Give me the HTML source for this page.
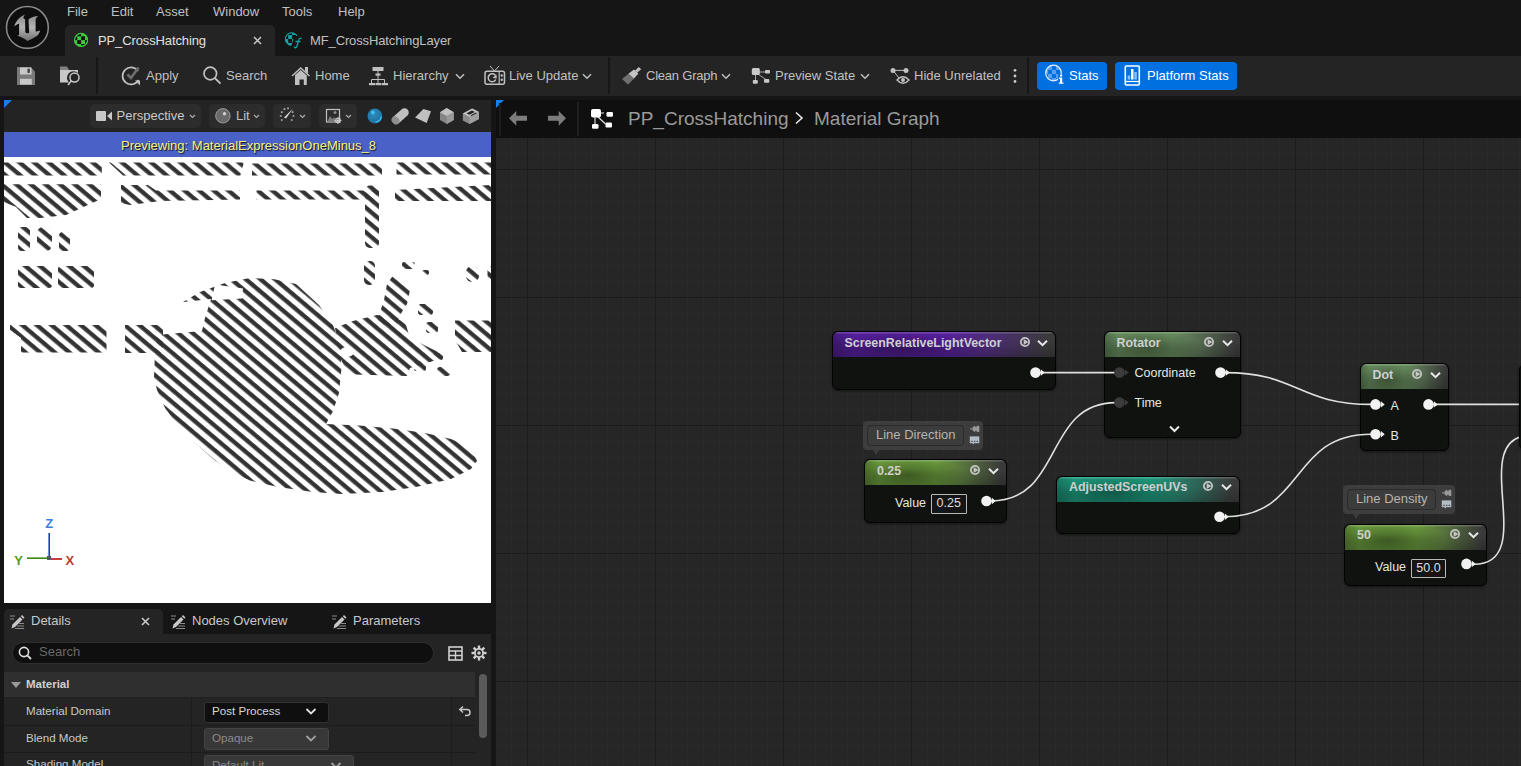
<!DOCTYPE html>
<html><head><meta charset="utf-8">
<style>
*{margin:0;padding:0;box-sizing:border-box}
html,body{width:1521px;height:766px;overflow:hidden;background:#151515;font-family:"Liberation Sans",sans-serif;color:#c0c0c0;position:relative}
.a{position:absolute;white-space:nowrap}
.t13{font-size:13px;line-height:16px}
.menu{color:#c0c0c0;font-size:13px;top:4px}
#tabs .tab{position:absolute;top:25px;height:31px;border-radius:5px 5px 0 0}
#toolbar{position:absolute;left:0;top:56px;width:1521px;height:40px;background:#242424}
.tb{color:#c0c0c0;font-size:13px;top:12px;z-index:2}
.sep{position:absolute;width:2px;background:#171717}
#toolbar svg{z-index:2}
.btnblue{position:absolute;top:6px;height:28px;background:#0070e0;border-radius:4px}
#vp{position:absolute;left:4px;top:100px;width:487px;height:503px;background:#fff;overflow:hidden}
#vptb{position:absolute;left:0;top:0;width:487px;height:32px;background:#232323}
.vbtn{position:absolute;top:4px;height:24px;background:#2c2c2c;border-radius:5px}
#prevbar{position:absolute;left:0;top:32px;width:487px;height:25px;background:#4a62c8}
#graph{position:absolute;left:496px;top:100px;width:1025px;height:666px;overflow:hidden;
background-color:#262626;
background-image:
linear-gradient(to right,#1c1c1c 1px,transparent 1px),
linear-gradient(to bottom,#1c1c1c 1px,transparent 1px),
linear-gradient(to right,#2a2a2a 1px,transparent 1px),
linear-gradient(to bottom,#292929 1px,transparent 1px);
background-size:128px 128px,128px 128px,16px 16px,16px 16px;
background-position:31px 69px,31px 69px,15px 5px,15px 5px}
#gtitle{position:absolute;left:0;top:0;width:1025px;height:38px;background:rgba(12,12,12,0.86)}
#details{position:absolute;left:4px;top:609px;width:487px;height:157px}
.node{position:absolute;background:#10120f;border:1px solid #030303;border-radius:6px;box-shadow:0 1px 3px rgba(0,0,0,0.5);overflow:hidden}
.nh{position:absolute;left:0;top:0;right:0;border-radius:5px 5px 0 0}
.nt{position:absolute;font-weight:bold;font-size:12.4px;line-height:14px;color:#cfcfcf;white-space:nowrap}
.nic{position:absolute}
.pl{position:absolute;font-size:12.5px;line-height:14px;color:#e6e6e6;white-space:nowrap}
.vbox{position:absolute;border:1px solid #b8b8b8;border-radius:1px;background:#151515;font-size:12.5px;line-height:17px;color:#dedede;text-align:center}
.cm{position:absolute;background:rgba(70,70,70,0.75);border-radius:4px}
.cmi{position:absolute;left:4px;top:4.5px;height:20.5px;background:rgba(60,60,60,0.9);border:1px solid rgba(40,40,40,0.8);border-radius:4px}
.cmt{position:absolute;left:13px;top:6.5px;font-size:13px;line-height:16px;color:#b4b4b4;white-space:nowrap}
.cmtail{position:absolute;left:10px;bottom:-5px;width:0;height:0;border-left:3px solid transparent;border-right:3px solid transparent;border-top:5px solid rgba(70,70,70,0.75)}
</style></head><body>
<!-- logo -->
<svg class="a" style="left:0;top:0" width="56" height="56" viewBox="0 0 56 56">
<defs><linearGradient id="ug" x1="0" y1="0" x2="0" y2="1"><stop offset="0" stop-color="#8a8a8a"/><stop offset="0.5" stop-color="#b4b4b4"/><stop offset="1" stop-color="#707070"/></linearGradient></defs>
<circle cx="27.4" cy="27.4" r="20.9" fill="#0e0e0e" stroke="#8c8c8c" stroke-width="1.5"/>
<path d="M14.3 26.2 C15.5 22 18.5 17.5 25.5 14.3 C24 15.5 23.3 17 23.5 18.2 L25.1 19.6 L25.3 31.9 C25.8 33.3 27.5 33.8 29.2 32.8 L28.5 19.6 C31 17 34.5 16 38.3 15.9 C36.5 17 35.6 18.5 35.6 20 L35.6 31.5 C37 31.5 38.8 31 40.1 30.5 C39.5 33 38.5 34.5 37.4 35.6 C35 37.5 32.5 38.8 27.4 41 L25.1 39.2 C22 37.5 19.5 36.5 17.1 35.3 C18 35.2 18.9 35 19.1 34.7 L19.1 23.7 C17.5 24 15.8 25 14.3 26.2Z" fill="url(#ug)"/>
</svg>
<div class="a menu" style="left:67px">File</div>
<div class="a menu" style="left:111px">Edit</div>
<div class="a menu" style="left:156px">Asset</div>
<div class="a menu" style="left:213px">Window</div>
<div class="a menu" style="left:282px">Tools</div>
<div class="a menu" style="left:338px">Help</div>
<div id="tabs">
<div class="tab" style="left:65px;width:210px;background:#242424"></div>
<svg class="a" style="left:72px;top:31px" width="18" height="18" viewBox="72 31 18 18"><defs><clipPath id="tc"><circle cx="81.06" cy="39.9" r="6.3"/></clipPath></defs><circle cx="81.06" cy="39.9" r="7" fill="#3ec83e"/><g clip-path="url(#tc)" fill="#141414"><rect x="81.1" y="36.3" width="3.9" height="3.8"/><rect x="77.2" y="40.1" width="3.9" height="3.9"/><rect x="73.3" y="36.3" width="3.9" height="3.8"/><rect x="77.2" y="32.4" width="3.9" height="3.9"/><rect x="85" y="40.1" width="3.9" height="3.9"/><rect x="81.1" y="44" width="3.9" height="3.9"/></g><circle cx="81.06" cy="39.9" r="6.5" fill="none" stroke="#3ec83e" stroke-width="1.1"/></svg>
<div class="a t13" style="left:98px;top:33px;color:#e0e0e0;letter-spacing:-0.12px">PP_CrossHatching</div>
<svg class="a" style="left:253px;top:36px" width="9" height="9" viewBox="0 0 9 9"><path d="M1 1L8 8M8 1L1 8" stroke="#c8c8c8" stroke-width="1.5"/></svg>
<svg class="a" style="left:282px;top:30px" width="22" height="20" viewBox="282 30 22 20"><defs><clipPath id="tc2"><circle cx="291.6" cy="39" r="5.9"/></clipPath></defs><circle cx="291.6" cy="39" r="6.6" fill="#18a0a2"/><g clip-path="url(#tc2)" fill="#141414"><rect x="292.1" y="35" width="3.9" height="4"/><rect x="288.2" y="39" width="3.9" height="3.9"/><rect x="284.3" y="35" width="3.9" height="4"/><rect x="288.2" y="31" width="3.9" height="4"/><rect x="296" y="39" width="3.9" height="3.9"/><rect x="292.1" y="42.9" width="3.9" height="3.9"/></g><circle cx="291.6" cy="39" r="6.2" fill="none" stroke="#18a0a2" stroke-width="1"/><path d="M294.5 36 L300 36 L303 50 L290 50Z" fill="#151515"/><path d="M301.5 39 C300.5 37.5 299 38 298.6 40.5 L296.8 46.5 C296.3 48 294.8 48.2 294 46.8 M295.5 41.5 H300.5" fill="none" stroke="#18a0a2" stroke-width="1.3"/></svg>
<div class="a t13" style="left:310px;top:33px;color:#c0c0c0;letter-spacing:-0.12px">MF_CrossHatchingLayer</div>
</div>
<div id="toolbar">
<div class="sep" style="left:96px;top:1px;height:37px"></div>
<svg class="a" style="left:16px;top:10px" width="20" height="20" viewBox="0 0 20 20"><path d="M1 1 H14.5 L19 5.5 V19 H1Z" fill="#7a7a7a"/><rect x="4" y="1.5" width="11.5" height="7" fill="#c8c8c8"/><rect x="11.5" y="2.7" width="2.3" height="4.2" fill="#3a3a3a"/><rect x="4" y="12.8" width="11.8" height="5.8" fill="#c8c8c8"/></svg>
<svg class="a" style="left:59px;top:9px" width="23" height="22" viewBox="0 0 23 22"><path d="M1 1.5 H8 L10 5 H1Z" fill="#808080"/><path d="M1 5 H19 V8 A6 6 0 0 0 10 17.5 H1Z" fill="#c8c8c8"/><circle cx="15.5" cy="12.5" r="4.5" fill="none" stroke="#c8c8c8" stroke-width="1.5"/><path d="M12.5 15.5 L9 20" stroke="#c8c8c8" stroke-width="1.6"/></svg>
<svg class="a" style="left:121px;top:9px" width="22" height="22" viewBox="0 0 22 22"><path d="M17 6 A8.5 8.5 0 1 0 17.5 15" fill="none" stroke="#c0c0c0" stroke-width="1.7"/><path d="M14 15.5 H19 V20.5Z" fill="#c0c0c0"/><path d="M6.5 9.5 L10 13 L17.5 2.5" fill="none" stroke="#6e6e6e" stroke-width="2.6"/></svg>
<svg class="a" style="left:202px;top:9px" width="20" height="20" viewBox="0 0 20 20"><circle cx="8.3" cy="8.5" r="6.3" fill="none" stroke="#c0c0c0" stroke-width="1.7"/><path d="M12.8 13 L18.5 18.7" stroke="#c0c0c0" stroke-width="1.9"/></svg>
<svg class="a" style="left:291px;top:10px" width="20" height="20" viewBox="0 0 20 20"><path d="M1 10 L9.7 2 L18.5 10" fill="none" stroke="#c0c0c0" stroke-width="1.5"/><path d="M14 1 H17 V8 L14 5Z" fill="#c0c0c0"/><path d="M4 9 L9.7 4 L15.8 9.5 V19 H12.8 V13.5 H8.5 V19 H4Z" fill="#c0c0c0"/></svg>
<svg class="a" style="left:368px;top:10px" width="21" height="20" viewBox="0 0 21 20"><g fill="#c0c0c0"><rect x="4.5" y="1" width="11" height="4"/><rect x="7.5" y="7.5" width="5" height="2.2"/><rect x="1" y="17" width="6" height="2.2"/><rect x="7.5" y="17" width="6" height="2.2"/><rect x="14" y="17" width="6" height="2.2"/></g><path d="M10 5 V17 M3.5 13.5 H16.5 M3.5 13.5 V17 M16.5 13.5 V17" stroke="#c0c0c0" stroke-width="1"/></svg>
<svg class="a" style="left:455px;top:17px" width="10" height="7" viewBox="0 0 10 7"><path d="M1 1.3 L5 5.3 L9 1.3" fill="none" stroke="#c0c0c0" stroke-width="1.5"/></svg>
<svg class="a" style="left:484px;top:9px" width="22" height="21" viewBox="0 0 22 21"><path d="M6 1 L10.5 6 L15 1" fill="none" stroke="#c0c0c0" stroke-width="1"/><rect x="1" y="6.3" width="19.5" height="13" rx="2" fill="none" stroke="#c0c0c0" stroke-width="1.5"/><path d="M15.2 6.5 V19" stroke="#c0c0c0" stroke-width="1.2"/><circle cx="17.8" cy="10.5" r="1.2" fill="#c0c0c0"/><circle cx="17.8" cy="14.8" r="1.2" fill="#c0c0c0"/><path d="M11.5 10.5 A4 4 0 1 0 11.8 14.5" fill="none" stroke="#c0c0c0" stroke-width="1.5"/><path d="M8.5 13 L12.5 9.5 L12.8 13.5Z" fill="#c0c0c0"/></svg>
<svg class="a" style="left:582px;top:17px" width="10" height="7" viewBox="0 0 10 7"><path d="M1 1.3 L5 5.3 L9 1.3" fill="none" stroke="#c0c0c0" stroke-width="1.5"/></svg>
<svg class="a" style="left:622px;top:10.5px" width="21" height="19" viewBox="0 0 21 19"><g transform="translate(0.2,0.1) scale(0.9 0.82)"><path d="M21.1 2.5 L16.8 6.7 L14.3 4.2 L18.5 -0.1Z" fill="#c0c0c0"/><path d="M18.0 7.9 L12.9 14.1 L6.9 8.1 L13.1 3.0Z" fill="#c4c4c4"/><path d="M12.9 14.1 L6.5 21.2 L-0.2 14.5 L6.9 8.1Z" fill="#707070"/></g></svg>
<svg class="a" style="left:721px;top:17px" width="10" height="7" viewBox="0 0 10 7"><path d="M1 1.3 L5 5.3 L9 1.3" fill="none" stroke="#c0c0c0" stroke-width="1.5"/></svg>
<svg class="a" style="left:751px;top:11px" width="20" height="18" viewBox="0 0 20 18"><path d="M5 5 H16 M4.5 6 V14 M5.5 6 L15.5 13" stroke="#a8a8a8" stroke-width="1"/><rect x="0.8" y="1" width="8" height="7" rx="1.5" fill="#c8c8c8"/><rect x="14" y="3" width="5" height="3.6" rx="1" fill="#c8c8c8"/><rect x="1.8" y="13" width="5" height="3.7" rx="1" fill="#c8c8c8"/><rect x="13" y="12" width="5.3" height="3.7" rx="1" fill="#c8c8c8"/></svg>
<svg class="a" style="left:860px;top:17px" width="10" height="7" viewBox="0 0 10 7"><path d="M1 1.3 L5 5.3 L9 1.3" fill="none" stroke="#c0c0c0" stroke-width="1.5"/></svg>
<svg class="a" style="left:889px;top:10px" width="21" height="20" viewBox="0 0 21 20"><circle cx="4" cy="4.4" r="2.5" fill="#c0c0c0"/><circle cx="17" cy="4.4" r="2.5" fill="#c0c0c0"/><path d="M4 4.4 H17 M4 4.4 L10 12" stroke="#c0c0c0" stroke-width="1"/><path d="M8 14 Q14 7.5 20 14 Q14 20.5 8 14Z" fill="none" stroke="#c0c0c0" stroke-width="1.4"/><circle cx="14" cy="14" r="2" fill="#c0c0c0"/></svg>
<svg class="a" style="left:1012px;top:11px" width="6" height="18" viewBox="0 0 6 18"><circle cx="3" cy="3.3" r="1.4" fill="#c8c8c8"/><circle cx="3" cy="9" r="1.4" fill="#c8c8c8"/><circle cx="3" cy="14.5" r="1.4" fill="#c8c8c8"/></svg>
<svg class="a" style="left:1044px;top:8px" width="20" height="20" viewBox="0 0 20 20"><defs><clipPath id="sc"><circle cx="9.5" cy="9" r="7.6"/></clipPath></defs><g clip-path="url(#sc)" fill="#5aa0f0"><rect x="4" y="2" width="4" height="4"/><rect x="8" y="6" width="4" height="4"/><rect x="4" y="10" width="4" height="4"/><rect x="12" y="2" width="4" height="4"/><rect x="0" y="6" width="4" height="4"/><rect x="12" y="10" width="4" height="4"/><rect x="8" y="14" width="4" height="4"/></g><circle cx="9.5" cy="9" r="7.8" fill="none" stroke="#e8f0ff" stroke-width="1.2"/><rect x="14" y="10" width="6" height="10" fill="#0070e0"/><rect x="16" y="10.5" width="2.2" height="2" fill="#fff"/><path d="M14.8 13.5 H18.2 V18.5 H19.5 V19.8 H14.8 V18.5 H16 V14.8 H14.8Z" fill="#fff"/></svg>
<svg class="a" style="left:1124px;top:9px" width="17" height="21" viewBox="0 0 17 21"><rect x="1.3" y="1" width="14" height="19" rx="1" fill="none" stroke="#fff" stroke-width="1.6"/><path d="M1.5 16.5 H15" stroke="#fff" stroke-width="1.2"/><circle cx="8.3" cy="18.3" r="1" fill="#0070e0"/><rect x="3.7" y="10.5" width="2.5" height="4" fill="#8cc0f5"/><rect x="7" y="4" width="2.5" height="10.5" fill="#fff"/><rect x="10.3" y="7" width="2.5" height="7.5" fill="#8cc0f5"/></svg>

<div class="a tb" style="left:146px">Apply</div>
<div class="a tb" style="left:226px">Search</div>
<div class="a tb" style="left:315px">Home</div>
<div class="a tb" style="left:393px">Hierarchy</div>
<div class="a tb" style="left:509px">Live Update</div>
<div class="sep" style="left:608px;top:1px;height:37px"></div>
<div class="a tb" style="left:646px;letter-spacing:-0.22px">Clean Graph</div>
<div class="a tb" style="left:775px">Preview State</div>
<div class="a tb" style="left:914px">Hide Unrelated</div>
<div class="sep" style="left:1027px;top:1px;height:37px"></div>
<div class="btnblue" style="left:1037px;width:70px"></div>
<div class="a tb" style="left:1069px;color:#fff">Stats</div>
<div class="btnblue" style="left:1115px;width:122px"></div>
<div class="a tb" style="left:1147px;color:#fff">Platform Stats</div>
</div>
<svg class="a" style="left:4px;top:100px;z-index:3" width="9" height="9" viewBox="0 0 9 9"><path d="M0 0 H8 L0 8Z" fill="#1080f0"/></svg>
<div id="vp">
<div id="vptb">
<div class="vbtn" style="left:86px;width:111px"></div>
<div class="a t13" style="left:112.5px;top:8px;color:#c8c8c8">Perspective</div>
<div class="vbtn" style="left:205px;width:56px"></div>
<div class="a t13" style="left:232px;top:8px">Lit</div>
<div class="vbtn" style="left:269px;width:38px"></div>
<div class="vbtn" style="left:315px;width:38px"></div>
<svg class="a" style="left:92px;top:10px" width="18" height="12" viewBox="0 0 18 12"><rect x="0" y="1" width="10" height="10" rx="0.8" fill="#c8c8c8"/><path d="M11 6 L16 1.5 V10.5Z" fill="#c8c8c8"/></svg>
<svg class="a" style="left:185px;top:14px" width="7" height="5" viewBox="0 0 7 5"><path d="M1 1 L3.5 3.5 L6 1" fill="none" stroke="#b0b0b0" stroke-width="1.1"/></svg>
<svg class="a" style="left:211px;top:8px" width="16" height="16" viewBox="0 0 16 16"><circle cx="7.9" cy="7.8" r="7.2" fill="#6a6a6a" stroke="#9a9a9a" stroke-width="1"/><circle cx="9.5" cy="5.8" r="1.7" fill="#d0d0d0"/></svg>
<svg class="a" style="left:249px;top:14px" width="7" height="5" viewBox="0 0 7 5"><path d="M1 1 L3.5 3.5 L6 1" fill="none" stroke="#b0b0b0" stroke-width="1.1"/></svg>
<svg class="a" style="left:275px;top:7px" width="16" height="16" viewBox="0 0 16 16"><g fill="#9a9a9a"><circle cx="1.8" cy="9" r="1.1"/><circle cx="2.8" cy="5.2" r="1.1"/><circle cx="5.5" cy="2.2" r="1.1"/><circle cx="9" cy="1.3" r="1.1"/><circle cx="14.5" cy="9" r="1.1"/><circle cx="13.6" cy="5.2" r="1.1"/><circle cx="2.8" cy="13" r="1.1"/><circle cx="12.8" cy="13" r="1.1"/></g><path d="M5 10.5 L14 1.5 L7 11.5Z" fill="#d8d8d8"/></svg>
<svg class="a" style="left:295px;top:14px" width="7" height="5" viewBox="0 0 7 5"><path d="M1 1 L3.5 3.5 L6 1" fill="none" stroke="#b0b0b0" stroke-width="1.1"/></svg>
<svg class="a" style="left:321px;top:8px" width="17" height="16" viewBox="0 0 17 16"><rect x="1.5" y="1.5" width="13" height="12.5" fill="none" stroke="#c0c0c0" stroke-width="1.2"/><circle cx="10" cy="4.5" r="1.5" fill="#8a8a8a"/><path d="M2.5 13 L5 8 L7.5 11 L9 9 L11 12 L11 13Z" fill="#7a7a7a"/><circle cx="13" cy="12.5" r="2.4" fill="none" stroke="#d0d0d0" stroke-width="1"/><path d="M13 9 V16 M9.5 12.5 H16.5 M10.5 10 L15.5 15 M15.5 10 L10.5 15" stroke="#d0d0d0" stroke-width="0.8"/></svg>
<svg class="a" style="left:341px;top:14px" width="7" height="5" viewBox="0 0 7 5"><path d="M1 1 L3.5 3.5 L6 1" fill="none" stroke="#b0b0b0" stroke-width="1.1"/></svg>
<svg class="a" style="left:351px;top:0" width="136" height="32" viewBox="355 100 136 32">
<defs><radialGradient id="sph" cx="0.4" cy="0.35" r="0.65"><stop offset="0" stop-color="#2e8fc0"/><stop offset="1" stop-color="#1d6f9c"/></radialGradient></defs>
<circle cx="374.9" cy="116" r="7.4" fill="url(#sph)"/><circle cx="372.8" cy="112.5" r="1.8" fill="#3cc8ff"/><path d="M375.5 122 A6.2 6.2 0 0 0 381.2 116.5" fill="none" stroke="#3cc0f8" stroke-width="1.4"/>
<path d="M392.5 117.5 L401.5 109.5 A3.5 3.5 0 0 1 407.5 115.5 L398.5 123.5Z" fill="#c0c0c0"/><ellipse cx="395.5" cy="120.5" rx="3.6" ry="4.3" transform="rotate(-45 395.5 120.5)" fill="#8e8e8e"/>
<path d="M415.1 117.4 L423.4 108.9 L431 111.2 L426.6 123.1Z" fill="#c0c0c0"/>
<path d="M446.7 108 L453.8 112.3 V120.1 L446.7 124 L440 120.1 V112.3Z" fill="#858585"/><path d="M446.7 108 L453.8 112.3 L446.7 116 L440 112.3Z" fill="#c0c0c0"/><path d="M446.7 116 L453.8 112.3 V120.1 L446.7 124Z" fill="#9a9a9a"/>
<path d="M472.2 108.5 L479 112 V119 L469.5 124 L462.8 120.5 V113.4Z" fill="#8a8a8a"/><path d="M472.2 108.5 L479 112 L469.5 117 L462.8 113.4Z" fill="#c0c0c0"/><path d="M469.5 117 L479 112 V119 L469.5 124Z" fill="#a0a0a0"/>
<path d="M466.5 113.2 L472 110.4 L474.8 112 L469.3 114.8Z M470.5 115.3 L476 112.5 L477 113.1 L471.5 115.9Z" fill="#222"/>
</svg>
</div>
<svg class="a" style="left:0;top:57px" width="487" height="446" viewBox="0 0 487 446">
<defs><pattern id="hatch" patternUnits="userSpaceOnUse" width="20" height="9.43" patternTransform="rotate(40.13)">
<rect x="0" y="5.73" width="20" height="4.3" fill="#323232"/><rect x="0" y="-3.7" width="20" height="4.3" fill="#323232"/></pattern></defs>
<g transform="translate(-4,-157)" fill="url(#hatch)"><path d="M4.0 162.5 L101.8 162.5 L101.8 175.5 L4.0 175.5Z"/>
<path d="M109.0 162.5 L243.8 162.5 L240.3 175.5 L123.0 175.5Z"/>
<path d="M252.0 163.5 L382.0 163.5 L382.0 175.5 L252.0 175.5Z"/>
<path d="M396.5 162.5 L491.0 162.5 L491.0 174.5 L396.5 174.5Z"/>
<path d="M4.0 184.3 L101.0 184.3 L101.0 199.0 L66.0 215.0 L40.0 218.0 L27.0 218.0 L16.0 207.0 L4.0 202.0Z"/>
<path d="M121.0 185.0 L148.0 185.0 L156.0 190.5 L240.0 190.5 L240.0 199.5 L160.0 201.0 L130.0 205.0 L121.0 203.0Z"/>
<path d="M256.5 190.5 L377.0 190.5 L377.0 199.5 L256.5 199.5Z"/>
<path d="M395.0 190.0 L491.0 185.0 L491.0 201.0 L395.0 201.0Z"/>
<rect x="365" y="185.5" width="14" height="62.5" rx="5"/>
<rect x="364" y="261" width="11" height="24" rx="5"/>
<rect x="18" y="227" width="12" height="24" rx="4"/>
<rect x="37" y="227" width="15" height="24" rx="6"/>
<rect x="59" y="232" width="11" height="19" rx="4"/>
<rect x="18" y="266" width="34" height="22" rx="3"/>
<rect x="58" y="266" width="36" height="22" rx="3"/>
<path d="M10.0 325.0 L106.5 325.0 L106.5 352.6 L21.0 352.6 L21.0 338.0 L10.0 330.0Z"/>
<path d="M125.0 325.0 L163.0 325.0 L163.0 353.0 L125.0 353.0Z"/>
<path d="M183.0 302.0 L200.0 292.0 L225.0 283.0 L250.0 278.0 L273.0 279.0 L296.0 284.0 L319.0 305.0 L333.0 325.0 L341.0 348.0 L341.3 370.0 L339.0 393.0 L333.0 411.0 L326.0 424.0 L359.0 425.6 L393.0 428.6 L425.0 433.0 L451.0 439.0 L471.0 448.0 L477.0 461.0 L471.0 469.0 L451.0 479.0 L416.0 487.0 L382.0 492.0 L342.0 494.0 L313.0 492.0 L278.0 487.0 L250.0 480.5 L232.0 472.0 L215.0 460.5 L203.0 450.0 L190.0 438.0 L177.0 424.0 L165.0 408.0 L157.0 390.0 L154.0 377.0 L155.0 352.0 L157.0 335.0 L202.0 331.0 L205.0 318.0 L211.0 299.0Z"/>
<path d="M335.0 328.0 L353.0 321.0 L377.0 315.0 L395.0 318.0 L405.0 322.0 L410.0 338.0 L438.0 352.0 L442.0 358.0 L430.0 362.0 L410.0 368.0 L407.0 376.0 L355.0 374.5 L345.0 368.0 L340.0 357.0Z"/>
<path d="M455.0 320.4 L491.0 320.4 L491.0 352.0 L462.0 352.0 L455.0 340.0Z"/>
<rect x="426" y="322" width="12" height="11" rx="3"/>
<rect x="433" y="353" width="10" height="7" rx="2"/>
<rect x="437" y="367" width="13" height="9" rx="3"/>
<rect x="414" y="361" width="12" height="10" rx="2"/>
<rect x="466" y="266" width="13" height="16" rx="6"/>
<rect x="487.5" y="266" width="4.5" height="14" rx="2"/>
<path d="M377.0 325.0 L380.0 312.0 L384.0 300.0 L387.0 284.0 L392.0 277.0 L398.0 276.0 L410.0 290.0 L407.0 304.0 L400.0 315.0 L397.0 325.0Z"/>
<rect x="402" y="262" width="13" height="7" rx="2"/>
<rect x="422" y="270" width="7" height="5" rx="2"/>
<rect x="418" y="304" width="15" height="11" rx="3"/><path d="M215 284.5 L243 288.5 L242 298.5 L211.6 300.2Z" fill="#fff"/><ellipse cx="347" cy="352" rx="7" ry="5" fill="#fff"/></g></svg>
<svg class="a" style="left:-4px;top:300px" width="90" height="180" viewBox="0 400 90 180">
<text x="45.3" y="527.5" font-family="Liberation Sans" font-weight="bold" font-size="13" fill="#3c7fe0">Z</text>
<path d="M49.2 533 V556.5" stroke="#1040c8" stroke-width="1.6"/>
<path d="M27 558.2 H47" stroke="#3a8a12" stroke-width="1.6"/>
<path d="M51 559 H62" stroke="#b01010" stroke-width="1.6"/>
<rect x="47.3" y="556.6" width="3.5" height="3" fill="#5a5a5a" stroke="#333" stroke-width="0.6"/>
<text x="14.2" y="564.5" font-family="Liberation Sans" font-weight="bold" font-size="13" fill="#5a9a22">Y</text>
<text x="65.5" y="565" font-family="Liberation Sans" font-weight="bold" font-size="13" fill="#c23a22">X</text>
</svg>
<div id="prevbar"><div class="a t13" style="left:117px;top:6px;color:#f8f27c;text-shadow:1px 1px 1px #111">Previewing: MaterialExpressionOneMinus_8</div></div>
</div>
<div id="graph">
<div id="gtitle">
<svg class="a" style="left:0;top:0" width="9" height="9" viewBox="0 0 9 9"><path d="M0 0 H8 L0 8Z" fill="#1080f0"/></svg>
<div class="a" style="left:3px;top:3px;width:2px;height:33px;background:#1c1c1c"></div>
<svg class="a" style="left:12px;top:10px" width="20" height="17" viewBox="0 0 20 17"><path d="M1 8.3 L8.3 1 V5.8 H19 V10.8 H8.3 V15.7Z" fill="#7c7c7c"/></svg>
<svg class="a" style="left:51px;top:10px" width="20" height="17" viewBox="0 0 20 17"><path d="M19 8.3 L11.7 1 V5.8 H1 V10.8 H11.7 V15.7Z" fill="#7c7c7c"/></svg>
<div class="a" style="left:81px;top:2px;width:2px;height:34px;background:#1e1e1e"></div>
<svg class="a" style="left:94px;top:8px" width="24" height="22" viewBox="0 0 24 22"><path d="M5 5 H14 M5 6 V19 M6 7 L15.5 16" stroke="#e8e8e8" stroke-width="1.1"/><rect x="1" y="1" width="10" height="8.5" rx="2" fill="#fff"/><rect x="16.5" y="4" width="6.5" height="4.8" rx="1.3" fill="#fff"/><rect x="2" y="16" width="6.5" height="4.8" rx="1.3" fill="#fff"/><rect x="15.5" y="14.5" width="6.5" height="5" rx="1.3" fill="#fff"/></svg>
<svg class="a" style="left:298px;top:11px" width="11" height="14" viewBox="0 0 11 14"><path d="M2 1.5 L8 7 L2 12.5" fill="none" stroke="#e8e8e8" stroke-width="1.6"/></svg>
<div class="a" style="left:132px;top:8px;font-size:19px;color:#9a9a9a">PP_CrossHatching</div>
<div class="a" style="left:318px;top:8px;font-size:19px;color:#9a9a9a">Material Graph</div>
</div>
<svg class="a" style="left:0;top:0;z-index:4" width="1025" height="666"><path d="M544.0 272.6 C569.3 272.6 594.7 272.6 620.0 272.6" fill="none" stroke="#e0e0e0" stroke-width="1.6"/><path d="M495.0 401.0 C567.5 401.0 547.5 302.6 620.0 302.6" fill="none" stroke="#e0e0e0" stroke-width="1.6"/><path d="M729.0 272.6 C801.0 272.6 803.0 304.4 875.0 304.4" fill="none" stroke="#e0e0e0" stroke-width="1.6"/><path d="M728.0 416.8 C810.0 416.8 793.0 334.3 875.0 334.3" fill="none" stroke="#e0e0e0" stroke-width="1.6"/><path d="M937.0 304.4 C969.3 304.4 1001.7 304.4 1034.0 304.4" fill="none" stroke="#e0e0e0" stroke-width="1.6"/><path d="M978.0 464.3 C1044.6 464.3 968.7 335.2 1035.3 335.2" fill="none" stroke="#e0e0e0" stroke-width="1.6"/></svg>
<div class="cm" style="left:367.0px;top:320.5px;width:120.0px;height:29.5px">
<div class="cmi" style="width:97.0px"></div><div class="cmt">Line Direction</div><div class="cmtail"></div>
<svg class="a" style="right:3px;top:3px" width="12" height="22" viewBox="0 0 12 22"><path d="M2 4.9 H5" stroke="#9a9a9a" stroke-width="1"/><path d="M4.6 3.2 L6.8 1.8 L8 3.6 L9.3 1.6 L11.3 2.2 V7.8 L9.3 8.3 L8 6.3 L6.8 8 L4.6 6.6Z" fill="#9a9a9a"/><rect x="1.8" y="12.4" width="9.5" height="6.8" fill="#b4bcc8"/><path d="M4.6 19 L6.2 19 L5 20.8Z" fill="#b4bcc8"/><path d="M3.3 17.3h1.3M6 17.3h1.3M8.6 17.3h1.3" stroke="#39404a" stroke-width="1.3"/></svg>
</div>
<div class="cm" style="left:847.0px;top:384.5px;width:112.0px;height:29.5px">
<div class="cmi" style="width:89.0px"></div><div class="cmt">Line Density</div><div class="cmtail"></div>
<svg class="a" style="right:3px;top:3px" width="12" height="22" viewBox="0 0 12 22"><path d="M2 4.9 H5" stroke="#9a9a9a" stroke-width="1"/><path d="M4.6 3.2 L6.8 1.8 L8 3.6 L9.3 1.6 L11.3 2.2 V7.8 L9.3 8.3 L8 6.3 L6.8 8 L4.6 6.6Z" fill="#9a9a9a"/><rect x="1.8" y="12.4" width="9.5" height="6.8" fill="#b4bcc8"/><path d="M4.6 19 L6.2 19 L5 20.8Z" fill="#b4bcc8"/><path d="M3.3 17.3h1.3M6 17.3h1.3M8.6 17.3h1.3" stroke="#39404a" stroke-width="1.3"/></svg>
</div>
<div class="node" style="left:335.5px;top:231.0px;width:224.5px;height:58.5px">
<div class="nh" style="height:25.0px;background:linear-gradient(180deg,rgba(255,255,255,0.22) 0,rgba(255,255,255,0) 2.5px),linear-gradient(180deg,rgba(0,0,0,0) 35%,rgba(0,0,0,0.22) 100%),radial-gradient(ellipse 40% 70% at 30% 60%,rgba(0,0,0,0.38),rgba(0,0,0,0) 100%),linear-gradient(90deg,rgba(0,0,0,0.25) 0,rgba(0,0,0,0) 10%),linear-gradient(90deg,#5a22a4 0,#5a22a4 50%,#3a3a3a 97%)"></div>
<div class="nt" style="left:12px;top:3.7px">ScreenRelativeLightVector</div>
<svg class="nic" style="right:24.5px;top:3.7px" width="12" height="12" viewBox="0 0 12 12"><circle cx="6" cy="6" r="4.1" fill="none" stroke="#c4c4c4" stroke-width="1.8"/><path d="M4.7 3 L9.4 6 L4.7 9Z" fill="#c4c4c4"/></svg>
<svg class="nic" style="right:6px;top:4.5px" width="13" height="12" viewBox="0 0 13 12"><path d="M2 3.8 L6.5 8.2 L11 3.8" fill="none" stroke="#e8e8e8" stroke-width="2"/></svg>
</div>
<div class="node" style="left:607.5px;top:231.0px;width:137.0px;height:107.0px">
<div class="nh" style="height:25.0px;background:linear-gradient(180deg,rgba(255,255,255,0.22) 0,rgba(255,255,255,0) 2.5px),linear-gradient(180deg,rgba(0,0,0,0) 35%,rgba(0,0,0,0.22) 100%),radial-gradient(ellipse 40% 70% at 30% 60%,rgba(0,0,0,0.38),rgba(0,0,0,0) 100%),linear-gradient(90deg,rgba(0,0,0,0.25) 0,rgba(0,0,0,0) 10%),linear-gradient(90deg,#6a9060 0,#6a9060 50%,#3a3a3a 97%)"></div>
<div class="nt" style="left:12px;top:3.7px">Rotator</div>
<svg class="nic" style="right:24.5px;top:3.7px" width="12" height="12" viewBox="0 0 12 12"><circle cx="6" cy="6" r="4.1" fill="none" stroke="#c4c4c4" stroke-width="1.8"/><path d="M4.7 3 L9.4 6 L4.7 9Z" fill="#c4c4c4"/></svg>
<svg class="nic" style="right:6px;top:4.5px" width="13" height="12" viewBox="0 0 13 12"><path d="M2 3.8 L6.5 8.2 L11 3.8" fill="none" stroke="#e8e8e8" stroke-width="2"/></svg>
<div class="pl" style="left:30px;top:34px">Coordinate</div><div class="pl" style="left:30px;top:64px">Time</div><svg class="a" style="left:63px;top:92px" width="13" height="10" viewBox="0 0 13 10"><path d="M2 2.5 L6.5 7 L11 2.5" fill="none" stroke="#e8e8e8" stroke-width="2"/></svg></div>
<div class="node" style="left:368.0px;top:359.0px;width:142.5px;height:63.5px">
<div class="nh" style="height:25.0px;background:linear-gradient(180deg,rgba(255,255,255,0.22) 0,rgba(255,255,255,0) 2.5px),linear-gradient(180deg,rgba(0,0,0,0) 35%,rgba(0,0,0,0.22) 100%),radial-gradient(ellipse 40% 70% at 30% 60%,rgba(0,0,0,0.38),rgba(0,0,0,0) 100%),linear-gradient(90deg,rgba(0,0,0,0.25) 0,rgba(0,0,0,0) 10%),linear-gradient(90deg,#6c9e3e 0,#6c9e3e 50%,#3a3a3a 97%)"></div>
<div class="nt" style="left:12px;top:3.7px">0.25</div>
<svg class="nic" style="right:24.5px;top:3.7px" width="12" height="12" viewBox="0 0 12 12"><circle cx="6" cy="6" r="4.1" fill="none" stroke="#c4c4c4" stroke-width="1.8"/><path d="M4.7 3 L9.4 6 L4.7 9Z" fill="#c4c4c4"/></svg>
<svg class="nic" style="right:6px;top:4.5px" width="13" height="12" viewBox="0 0 13 12"><path d="M2 3.8 L6.5 8.2 L11 3.8" fill="none" stroke="#e8e8e8" stroke-width="2"/></svg>
<div class="pl" style="left:30px;top:36px">Value</div><div class="vbox" style="left:66px;top:34px;width:35.5px;height:19.5px">0.25</div></div>
<div class="node" style="left:560.0px;top:375.5px;width:183.5px;height:58.5px">
<div class="nh" style="height:25.0px;background:linear-gradient(180deg,rgba(255,255,255,0.22) 0,rgba(255,255,255,0) 2.5px),linear-gradient(180deg,rgba(0,0,0,0) 35%,rgba(0,0,0,0.22) 100%),radial-gradient(ellipse 40% 70% at 30% 60%,rgba(0,0,0,0.38),rgba(0,0,0,0) 100%),linear-gradient(90deg,rgba(0,0,0,0.25) 0,rgba(0,0,0,0) 10%),linear-gradient(90deg,#1e9e80 0,#1e9e80 50%,#3a3a3a 97%)"></div>
<div class="nt" style="left:12px;top:3.7px">AdjustedScreenUVs</div>
<svg class="nic" style="right:24.5px;top:3.7px" width="12" height="12" viewBox="0 0 12 12"><circle cx="6" cy="6" r="4.1" fill="none" stroke="#c4c4c4" stroke-width="1.8"/><path d="M4.7 3 L9.4 6 L4.7 9Z" fill="#c4c4c4"/></svg>
<svg class="nic" style="right:6px;top:4.5px" width="13" height="12" viewBox="0 0 13 12"><path d="M2 3.8 L6.5 8.2 L11 3.8" fill="none" stroke="#e8e8e8" stroke-width="2"/></svg>
</div>
<div class="node" style="left:863.5px;top:263.0px;width:89.0px;height:88.0px">
<div class="nh" style="height:25.0px;background:linear-gradient(180deg,rgba(255,255,255,0.22) 0,rgba(255,255,255,0) 2.5px),linear-gradient(180deg,rgba(0,0,0,0) 35%,rgba(0,0,0,0.22) 100%),radial-gradient(ellipse 40% 70% at 30% 60%,rgba(0,0,0,0.38),rgba(0,0,0,0) 100%),linear-gradient(90deg,rgba(0,0,0,0.25) 0,rgba(0,0,0,0) 10%),linear-gradient(90deg,#6a9060 0,#6a9060 50%,#3a3a3a 97%)"></div>
<div class="nt" style="left:12px;top:3.7px">Dot</div>
<svg class="nic" style="right:24.5px;top:3.7px" width="12" height="12" viewBox="0 0 12 12"><circle cx="6" cy="6" r="4.1" fill="none" stroke="#c4c4c4" stroke-width="1.8"/><path d="M4.7 3 L9.4 6 L4.7 9Z" fill="#c4c4c4"/></svg>
<svg class="nic" style="right:6px;top:4.5px" width="13" height="12" viewBox="0 0 13 12"><path d="M2 3.8 L6.5 8.2 L11 3.8" fill="none" stroke="#e8e8e8" stroke-width="2"/></svg>
<div class="pl" style="left:30px;top:35px">A</div><div class="pl" style="left:30px;top:65px">B</div></div>
<div class="node" style="left:848.0px;top:423.5px;width:142.5px;height:62.5px">
<div class="nh" style="height:25.0px;background:linear-gradient(180deg,rgba(255,255,255,0.22) 0,rgba(255,255,255,0) 2.5px),linear-gradient(180deg,rgba(0,0,0,0) 35%,rgba(0,0,0,0.22) 100%),radial-gradient(ellipse 40% 70% at 30% 60%,rgba(0,0,0,0.38),rgba(0,0,0,0) 100%),linear-gradient(90deg,rgba(0,0,0,0.25) 0,rgba(0,0,0,0) 10%),linear-gradient(90deg,#6c9e3e 0,#6c9e3e 50%,#3a3a3a 97%)"></div>
<div class="nt" style="left:12px;top:3.7px">50</div>
<svg class="nic" style="right:24.5px;top:3.7px" width="12" height="12" viewBox="0 0 12 12"><circle cx="6" cy="6" r="4.1" fill="none" stroke="#c4c4c4" stroke-width="1.8"/><path d="M4.7 3 L9.4 6 L4.7 9Z" fill="#c4c4c4"/></svg>
<svg class="nic" style="right:6px;top:4.5px" width="13" height="12" viewBox="0 0 13 12"><path d="M2 3.8 L6.5 8.2 L11 3.8" fill="none" stroke="#e8e8e8" stroke-width="2"/></svg>
<div class="pl" style="left:30px;top:35.5px">Value</div><div class="vbox" style="left:66px;top:34px;width:35px;height:19px">50.0</div></div>
<div class="node" style="left:1023px;top:263.7px;width:40px;height:86.5px;z-index:5"></div>
<svg class="a" style="left:0;top:0;z-index:6" width="1025" height="666"><circle cx="539.5" cy="272.6" r="5.3" fill="#f2f2f2"/><path d="M544.9 269.4 L548.7 272.6 L544.9 275.8Z" fill="#f2f2f2"/><circle cx="623.5" cy="272.6" r="5.3" fill="#3b3b3b"/><path d="M628.9 269.4 L632.7 272.6 L628.9 275.8Z" fill="#3b3b3b"/><circle cx="623.5" cy="302.6" r="5.3" fill="#3b3b3b"/><path d="M628.9 299.4 L632.7 302.6 L628.9 305.8Z" fill="#3b3b3b"/><circle cx="724.5" cy="272.6" r="5.3" fill="#f2f2f2"/><path d="M729.9 269.4 L733.7 272.6 L729.9 275.8Z" fill="#f2f2f2"/><circle cx="490.5" cy="401.0" r="5.3" fill="#f2f2f2"/><path d="M495.9 397.8 L499.7 401.0 L495.9 404.2Z" fill="#f2f2f2"/><circle cx="723.5" cy="416.8" r="5.3" fill="#f2f2f2"/><path d="M728.9 413.6 L732.7 416.8 L728.9 420.0Z" fill="#f2f2f2"/><circle cx="879.5" cy="304.4" r="5.3" fill="#f2f2f2"/><path d="M884.9 301.2 L888.7 304.4 L884.9 307.6Z" fill="#f2f2f2"/><circle cx="879.5" cy="334.3" r="5.3" fill="#f2f2f2"/><path d="M884.9 331.1 L888.7 334.3 L884.9 337.5Z" fill="#f2f2f2"/><circle cx="932.5" cy="304.4" r="5.3" fill="#f2f2f2"/><path d="M937.9 301.2 L941.7 304.4 L937.9 307.6Z" fill="#f2f2f2"/><circle cx="970.5" cy="463.9" r="5.3" fill="#f2f2f2"/><path d="M975.9 460.7 L979.7 463.9 L975.9 467.1Z" fill="#f2f2f2"/></svg>
</div>
<div id="details">
<div class="a" style="left:0;top:0;width:159px;height:25px;background:#242424;border-radius:5px 5px 0 0"></div>
<div class="a" style="left:0;top:25px;width:487px;height:132px;background:#242424"></div>
<svg class="a" style="left:5px;top:5px" width="16" height="16" viewBox="0 0 16 16"><path d="M1 2h5M1 5h4M8 12h7M6 14.5h9M10 9.5h5" stroke="#8a8a8a" stroke-width="1"/><path d="M2.5 14.5 L3.5 10.5 L11 3 L13.5 5.5 L6 13Z" fill="#c8c8c8"/><path d="M11.8 2.2 L13 1 L15.5 3.5 L14.3 4.7Z" fill="#c8c8c8"/></svg>
<div class="a t13" style="left:27px;top:4px;color:#c8c8c8">Details</div>
<svg class="a" style="left:137px;top:8px" width="9" height="9" viewBox="0 0 9 9"><path d="M1 1L8 8M8 1L1 8" stroke="#c8c8c8" stroke-width="1.6"/></svg>
<svg class="a" style="left:166px;top:5px" width="16" height="16" viewBox="0 0 16 16"><path d="M1 2h5M1 5h4M8 12h7M6 14.5h9M10 9.5h5" stroke="#8a8a8a" stroke-width="1"/><path d="M2.5 14.5 L3.5 10.5 L11 3 L13.5 5.5 L6 13Z" fill="#c8c8c8"/><path d="M11.8 2.2 L13 1 L15.5 3.5 L14.3 4.7Z" fill="#c8c8c8"/></svg>
<div class="a t13" style="left:188px;top:4px;color:#c8c8c8">Nodes Overview</div>
<svg class="a" style="left:327px;top:5px" width="16" height="16" viewBox="0 0 16 16"><path d="M1 2h5M1 5h4M8 12h7M6 14.5h9M10 9.5h5" stroke="#8a8a8a" stroke-width="1"/><path d="M2.5 14.5 L3.5 10.5 L11 3 L13.5 5.5 L6 13Z" fill="#c8c8c8"/><path d="M11.8 2.2 L13 1 L15.5 3.5 L14.3 4.7Z" fill="#c8c8c8"/></svg>
<div class="a t13" style="left:349px;top:4px;color:#c8c8c8">Parameters</div>
<!-- search -->
<div class="a" style="left:8px;top:33px;width:422px;height:22px;background:#0f0f0f;border:1px solid #2e2e2e;border-radius:11px"></div>
<svg class="a" style="left:14px;top:37px" width="15" height="15" viewBox="0 0 15 15"><circle cx="6" cy="6" r="4.6" fill="none" stroke="#e0e0e0" stroke-width="1.6"/><path d="M9.3 9.3 L13 13" stroke="#e0e0e0" stroke-width="1.8"/></svg>
<div class="a t13" style="left:35px;top:35px;color:#6a6a6a">Search</div>
<svg class="a" style="left:444px;top:37px" width="15" height="15" viewBox="0 0 15 15"><rect x="1" y="1" width="13" height="13" fill="none" stroke="#d0d0d0" stroke-width="1.6"/><path d="M1 5h13M1 9.5h13M7.5 5v9" stroke="#d0d0d0" stroke-width="1.4"/></svg>
<svg class="a" style="left:467px;top:36px" width="16" height="16" viewBox="0 0 16 16"><g fill="#d0d0d0"><circle cx="8" cy="8" r="5"/><rect x="6.8" y="0.5" width="2.4" height="15"/><rect x="0.5" y="6.8" width="15" height="2.4"/><rect x="6.8" y="0.5" width="2.4" height="15" transform="rotate(45 8 8)"/><rect x="6.8" y="0.5" width="2.4" height="15" transform="rotate(-45 8 8)"/></g><circle cx="8" cy="8" r="3.2" fill="#242424"/><circle cx="8" cy="8" r="1.8" fill="#d0d0d0"/></svg>
<!-- material header -->
<div class="a" style="left:0;top:63px;width:471px;height:26px;background:#2f2f2f;border-bottom:1px solid #202020"></div>
<svg class="a" style="left:6px;top:71px" width="12" height="10" viewBox="0 0 12 10"><path d="M1 2 L11 2 L6 8Z" fill="#9a9a9a"/></svg>
<div class="a" style="left:22px;top:67px;font-size:11.5px;line-height:16px;font-weight:bold;color:#d0d0d0">Material</div>
<!-- rows -->
<div class="a" style="left:0;top:89px;width:471px;height:68px;background:#242424"></div>
<div class="a" style="left:0;top:116px;width:471px;height:1px;background:#1c1c1c"></div>
<div class="a" style="left:0;top:143px;width:471px;height:1px;background:#1c1c1c"></div>
<div class="a" style="left:187px;top:89px;width:1px;height:68px;background:#1c1c1c"></div>
<div class="a" style="left:447px;top:89px;width:1px;height:68px;background:#1c1c1c"></div>
<div class="a" style="left:22px;top:95px;font-size:11.6px;line-height:14px;color:#c8c8c8">Material Domain</div>
<div class="a" style="left:22px;top:122px;font-size:11.6px;line-height:14px;color:#c8c8c8">Blend Mode</div>
<div class="a" style="left:22px;top:148px;font-size:11.6px;line-height:14px;color:#c8c8c8">Shading Model</div>
<div class="a" style="left:200px;top:92.5px;width:125px;height:21px;background:#0f0f0f;border:1px solid #303030;border-radius:3px"></div>
<div class="a" style="left:208px;top:95px;font-size:11.6px;line-height:14px;color:#d8d8d8">Post Process</div>
<svg class="a" style="left:301px;top:98px" width="12" height="9" viewBox="0 0 12 9"><path d="M1.5 2 L6 6.5 L10.5 2" fill="none" stroke="#e0e0e0" stroke-width="1.8"/></svg>
<svg class="a" style="left:454px;top:96px" width="14" height="12" viewBox="0 0 14 12"><path d="M5 1.5 L1.8 4.5 L5 7.5 M2 4.5 H9 A3 3 0 0 1 9 10.5 H7" fill="none" stroke="#c8c8c8" stroke-width="1.5"/></svg>
<div class="a" style="left:200px;top:119px;width:125px;height:22px;background:#383838;border:1px solid #444;border-radius:3px"></div>
<div class="a" style="left:208px;top:122px;font-size:11.6px;line-height:14px;color:#8a8a8a">Opaque</div>
<svg class="a" style="left:301px;top:125px" width="12" height="9" viewBox="0 0 12 9"><path d="M1.5 2 L6 6.5 L10.5 2" fill="none" stroke="#a0a0a0" stroke-width="1.8"/></svg>
<div class="a" style="left:200px;top:146px;width:150px;height:22px;background:#383838;border:1px solid #444;border-radius:3px"></div>
<div class="a" style="left:208px;top:149px;font-size:11.6px;line-height:14px;color:#8a8a8a">Default Lit</div>
<svg class="a" style="left:326px;top:152px" width="12" height="9" viewBox="0 0 12 9"><path d="M1.5 2 L6 6.5 L10.5 2" fill="none" stroke="#a0a0a0" stroke-width="1.8"/></svg>
<!-- scrollbar -->
<div class="a" style="left:475px;top:65px;width:8px;height:64px;background:#5a5a5a;border-radius:4px"></div>
</div>
</body></html>
